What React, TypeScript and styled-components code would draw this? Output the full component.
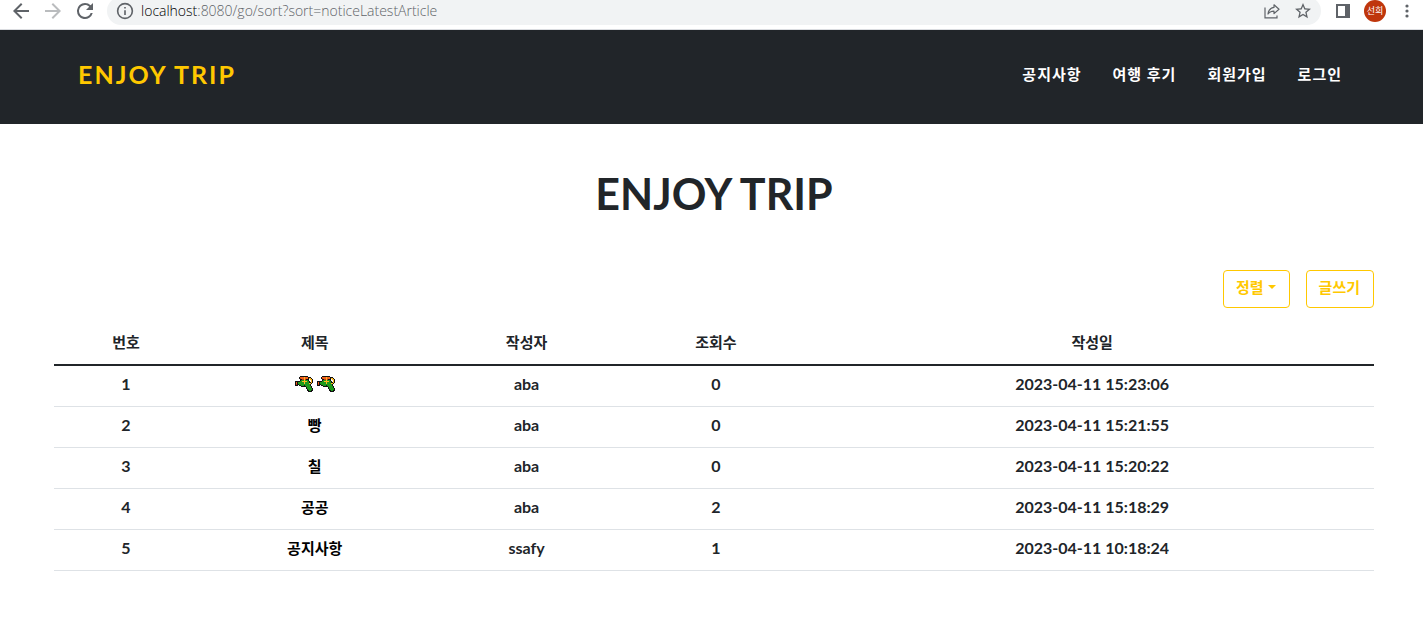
import React from "react";
import styled, { createGlobalStyle } from "styled-components";

const GlobalStyle = createGlobalStyle`
  *, *::before, *::after { box-sizing: border-box; }
  body {
    margin: 0;
    background: #fff;
    color: #212529;
    font-family: Lato, "Noto Sans CJK KR", sans-serif;
    font-size: 16px;
    line-height: 24px;
  }
`;

const BrowserBar = styled.div`
  display: flex;
  align-items: center;
  height: 30px;
  padding: 0 8px 7px 12px;
  border-bottom: 1px solid #dadce0;
  overflow: hidden;
`;

const BarButton = styled.button<{ $gap?: number; $faded?: boolean }>`
  display: flex;
  flex: none;
  margin: 0 ${(p) => p.$gap ?? 0}px 0 0;
  padding: 0;
  border: 0;
  background: none;
  color: ${(p) => (p.$faded ? "#babcbe" : "#5f6368")};
`;

const AddressBox = styled.div`
  display: flex;
  flex: 1;
  align-items: center;
  height: 28px;
  margin-right: 14px;
  padding: 0 10px 0 9px;
  border-radius: 14px;
  background: #f1f3f4;
  color: #5f6368;
`;

const Url = styled.span`
  flex: 1;
  margin-left: 7px;
  font-family: "Open Sans", sans-serif;
  font-size: 14px;
  font-weight: 300;
  line-height: 20px;
  color: #5f6368;
  white-space: nowrap;
`;

const Host = styled.span`
  color: #000;
`;

const Avatar = styled.button`
  flex: none;
  width: 22px;
  height: 22px;
  margin: 0 13px 0 0;
  padding: 0;
  border: 0;
  border-radius: 50%;
  background: #bf360c;
  color: #fff;
  font-family: "Noto Sans CJK KR", sans-serif;
  font-size: 9px;
  line-height: 22px;
`;

const SiteHeader = styled.header`
  display: flex;
  align-items: center;
  justify-content: space-between;
  height: 94px;
  padding: 0 65px 6px 78px;
  background: #212529;
`;

const Brand = styled.a`
  color: #ffc800;
  font-size: 25px;
  font-weight: 700;
  line-height: 36px;
  letter-spacing: 2px;
  text-decoration: none;
`;

const Nav = styled.nav`
  display: flex;
`;

const NavLink = styled.a`
  padding: 0 16px 0 15px;
  color: #fff;
  font-size: 15px;
  font-weight: 700;
  letter-spacing: 1px;
  text-decoration: none;
`;

const Main = styled.main`
  padding: 44px 49px 48px 54px;
`;

const Title = styled.h1`
  margin: 0;
  font-size: 43px;
  font-weight: 700;
  line-height: 52px;
  text-align: center;
`;

const Actions = styled.div`
  display: flex;
  justify-content: flex-end;
  gap: 16px;
  margin: 50px 0 16px;
`;

const OutlineButton = styled.button`
  display: flex;
  align-items: center;
  gap: 4px;
  height: 38px;
  padding: 0 13px 4px 12px;
  border: 1px solid #ffc800;
  border-radius: 4px;
  background: #fff;
  color: #ffc800;
  font-family: inherit;
  font-size: 15px;
  font-weight: 700;
  line-height: 24px;
`;

const Caret = styled.span`
  border: 4px solid transparent;
  border-top-color: currentColor;
  border-bottom: 0;
`;

const Table = styled.table`
  width: 100%;
  border-collapse: collapse;
  table-layout: fixed;
  text-align: center;
`;

const Col = styled.col<{ $share: number }>`
  width: ${(p) => p.$share}%;
`;

const HeadCell = styled.th`
  padding: 6px 8px 10px;
  border-bottom: 2px solid #212529;
  font-size: 15px;
  font-weight: 700;
`;

const Cell = styled.td`
  height: 41px;
  padding: 6px 8px 10px;
  border-bottom: 1px solid #dee2e6;
  font-weight: 700;
`;

const ArticleLink = styled.a`
  display: flex;
  justify-content: center;
  gap: 4px;
  color: #000;
  font-size: 15px;
  font-weight: 700;
  text-decoration: none;
`;

const gunColors: Record<string, string> = {
  K: "#111",
  O: "#f0601c",
  R: "#c23a12",
  G: "#1b9a1b",
  Y: "#ffb91e",
};

const gunPixels = [
  ".....KKKKKKKK.....",
  "....KOOOOYOOOKKK..",
  "....KROOOYOOOKYYK.",
  ".....KKRRYRKKK.YYK",
  ".....KGGGYGGGK..YK",
  "KKKKKGGYYYYYGGK.YK",
  "KOKGGGGGGYGGGGKKYK",
  "KOKGGGGGGYGGGGYYK.",
  "KRKKGGGGGGGGGGGK..",
  "KKK.KKGGGKGGGGGK..",
  "......KKKKKGGGGGK.",
  "...........KGGGGK.",
  "...........KGGGGGK",
  "............KGGGGK",
  "............KKGGKK",
  ".............KKKK.",
];

const WaterGun = () => (
  <svg width="18" height="24" viewBox="0 -4 18 24" shapeRendering="crispEdges" aria-hidden="true">
    {gunPixels.flatMap((row, y) =>
      [...row].map((p, x) =>
        p === "." ? null : <rect key={`${x}-${y}`} x={x} y={y} width="1" height="1" fill={gunColors[p]} />
      )
    )}
  </svg>
);

const articles = [
  { title: "", author: "aba", views: 0, date: "2023-04-11 15:23:06" },
  { title: "빵", author: "aba", views: 0, date: "2023-04-11 15:21:55" },
  { title: "칠", author: "aba", views: 0, date: "2023-04-11 15:20:22" },
  { title: "공공", author: "aba", views: 2, date: "2023-04-11 15:18:29" },
  { title: "공지사항", author: "ssafy", views: 1, date: "2023-04-11 10:18:24" },
];

const Arrow = ({ flip }: { flip?: boolean }) => (
  <svg width="18" height="18" viewBox="3 3 18 18" fill="currentColor">
    <path
      transform={flip ? "rotate(180 12 12)" : undefined}
      d="M20 11H7.83l5.59-5.59L12 4l-8 8 8 8 1.41-1.41L7.83 13H20v-2z"
    />
  </svg>
);

export default function App() {
  return (
    <>
      <GlobalStyle />
      <BrowserBar>
        <BarButton $gap={14} aria-label="Back"><Arrow /></BarButton>
        <BarButton $gap={14} $faded aria-label="Forward"><Arrow flip /></BarButton>
        <BarButton $gap={13} aria-label="Reload">
          <svg width="18" height="18" viewBox="3 3 18 18" fill="currentColor">
            <path d="M17.65 6.35A7.96 7.96 0 0 0 12 4a8 8 0 1 0 7.73 10h-2.08A6 6 0 1 1 12 6c1.66 0 3.14.69 4.22 1.78L13 11h7V4l-2.35 2.35z" />
          </svg>
        </BarButton>
        <AddressBox>
          <svg width="18" height="18" viewBox="1 1 22 22" fill="currentColor">
            <path d="M11 7h2v2h-2zm0 4h2v6h-2zm1-9a10 10 0 1 0 0 20 10 10 0 0 0 0-20zm0 18a8 8 0 1 1 0-16 8 8 0 0 1 0 16z" />
          </svg>
          <Url><Host>localhost</Host>:8080/go/sort?sort=noticeLatestArticle</Url>
          <BarButton $gap={15} aria-label="Share">
            <svg width="16" height="16" viewBox="0 0 16 16" fill="none" stroke="currentColor" strokeWidth="1.2">
              <path d="M1 4.500v10.400h12V12.500" />
              <path d="M10 1.800l5 4.400-5 4.400V8.200C7.400 8.200 5.400 9 4 11c.4-3.400 2.400-6 6-6.600z" strokeLinejoin="round" />
            </svg>
          </BarButton>
          <BarButton aria-label="Bookmark">
            <svg width="16" height="16" viewBox="2 2 20 20" fill="currentColor">
              <path d="M22 9.240l-7.190-.62L12 2 9.190 8.630 2 9.240l5.460 4.730L5.820 21 12 17.270 18.180 21l-1.630-7.030L22 9.240zM12 15.400l-3.760 2.270 1-4.280-3.320-2.880 4.380-.38L12 6.100l1.710 4.040 4.380.38-3.320 2.880 1 4.280L12 15.400z" />
            </svg>
          </BarButton>
        </AddressBox>
        <BarButton $gap={13} aria-label="Side panel">
          <svg width="16" height="14" viewBox="0 0 16 14" fill="currentColor">
            <path d="M1 0h14v14H1zM3 2v10h7V2z" fillRule="evenodd" />
          </svg>
        </BarButton>
        <Avatar>선희</Avatar>
        <BarButton aria-label="Menu">
          <svg width="16" height="16" viewBox="0 0 16 16" fill="currentColor">
            <circle cx="8" cy="3" r="1.600" />
            <circle cx="8" cy="8" r="1.600" />
            <circle cx="8" cy="13" r="1.600" />
          </svg>
        </BarButton>
      </BrowserBar>
      <SiteHeader>
        <Brand href="#">ENJOY TRIP</Brand>
        <Nav>
          <NavLink href="#">공지사항</NavLink>
          <NavLink href="#">여행 후기</NavLink>
          <NavLink href="#">회원가입</NavLink>
          <NavLink href="#">로그인</NavLink>
        </Nav>
      </SiteHeader>
      <Main>
        <Title>ENJOY TRIP</Title>
        <Actions>
          <OutlineButton type="button">정렬<Caret /></OutlineButton>
          <OutlineButton type="button">글쓰기</OutlineButton>
        </Actions>
        <Table>
          <colgroup>
            <Col $share={10.9} />
            <Col $share={17.7} />
            <Col $share={14.4} />
            <Col $share={14.3} />
            <Col $share={42.7} />
          </colgroup>
          <thead>
            <tr>
              <HeadCell scope="col">번호</HeadCell>
              <HeadCell scope="col">제목</HeadCell>
              <HeadCell scope="col">작성자</HeadCell>
              <HeadCell scope="col">조회수</HeadCell>
              <HeadCell scope="col">작성일</HeadCell>
            </tr>
          </thead>
          <tbody>
            {articles.map((a, i) => (
              <tr key={a.date}>
                <Cell>{i + 1}</Cell>
                <Cell>
                  <ArticleLink href="#">{a.title || <><WaterGun /><WaterGun /></>}</ArticleLink>
                </Cell>
                <Cell>{a.author}</Cell>
                <Cell>{a.views}</Cell>
                <Cell>{a.date}</Cell>
              </tr>
            ))}
          </tbody>
        </Table>
      </Main>
    </>
  );
}
